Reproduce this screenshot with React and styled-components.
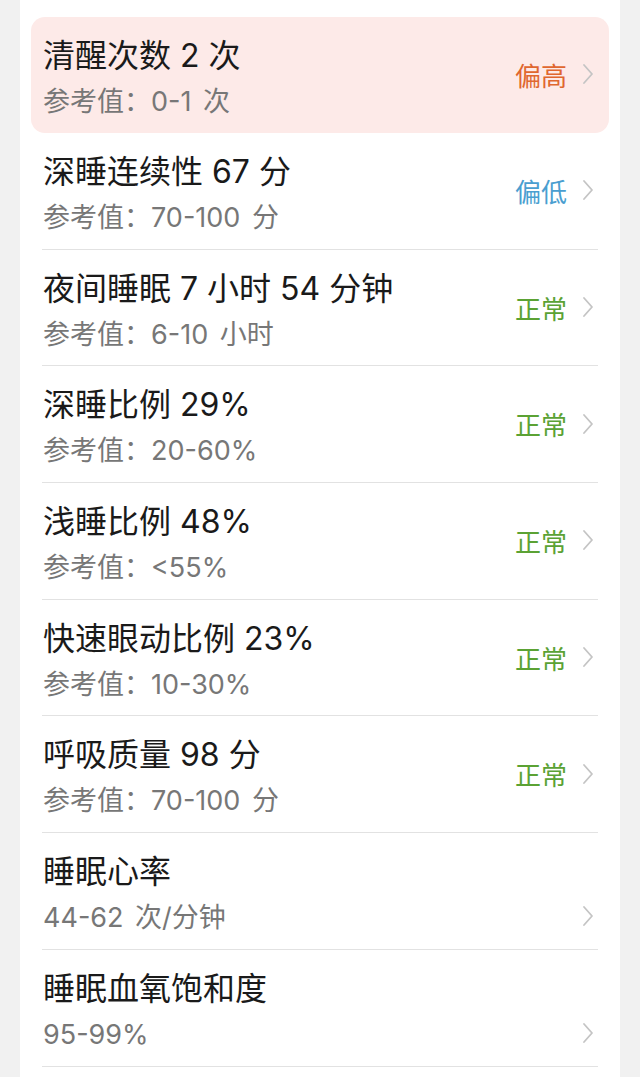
import React from 'react'
import styled, { createGlobalStyle } from 'styled-components'

const items = [
  { title: '清醒次数 2 次', sub: '参考值：0-1 次', status: '偏高', tone: 'high', active: true },
  { title: '深睡连续性 67 分', sub: '参考值：70-100 分', status: '偏低', tone: 'low' },
  { title: '夜间睡眠 7 小时 54 分钟', sub: '参考值：6-10 小时', status: '正常', tone: 'ok' },
  { title: '深睡比例 29%', sub: '参考值：20-60%', status: '正常', tone: 'ok' },
  { title: '浅睡比例 48%', sub: '参考值：<55%', status: '正常', tone: 'ok' },
  { title: '快速眼动比例 23%', sub: '参考值：10-30%', status: '正常', tone: 'ok' },
  { title: '呼吸质量 98 分', sub: '参考值：70-100 分', status: '正常', tone: 'ok' },
  { title: '睡眠心率', sub: '44-62 次/分钟' },
  { title: '睡眠血氧饱和度', sub: '95-99%' },
]

const toneColors = {
  high: '#e0672f',
  low: '#4a9ed0',
  ok: '#5ba234',
}

function Chevron({ low }) {
  return (
    <Arrow $low={low} width="14" height="22" viewBox="0 0 14 22">
      <path d="M3 2 L11 11 L3 20" fill="none" stroke="#c4c4c4" strokeWidth="1.8" strokeLinecap="round" strokeLinejoin="round" />
    </Arrow>
  )
}

function App() {
  return (
    <>
      <GlobalStyle />
      <Page>
        <Card>
          {items.map((it, i) => (
            <Row key={i} $active={it.active}>
              <TextCol>
                <Title>{it.title}</Title>
                <Sub>{it.sub}</Sub>
              </TextCol>
              {it.status ? (
                <Right>
                  <Status $tone={it.tone}>{it.status}</Status>
                  <Chevron />
                </Right>
              ) : (
                <Chevron low />
              )}
            </Row>
          ))}
        </Card>
      </Page>
    </>
  )
}

const GlobalStyle = createGlobalStyle`
body {
  margin: 0;
  background: #f1f1f1;
  font-family: Inter, "Noto Sans CJK SC", sans-serif;
}
`
const Page = styled.div`
height: 1077px;
overflow: hidden;
padding: 0 20px;
`
const Card = styled.div`
background: #fff;
padding: 17px 11px 40px;
min-height: 1077px;
box-sizing: border-box;
`
const Row = styled.div`
position: relative;
display: flex;
align-items: flex-start;
box-sizing: border-box;
height: ${p => p.$active ? '116px' : '116.7px'};
padding: 0 12px;
border-radius: ${p => p.$active ? '14px' : '0'};
background: ${p => p.$active ? '#fdeae8' : 'transparent'};
${p => !p.$active && `
  &::after {
    content: '';
    position: absolute;
    left: 11px;
    right: 11px;
    bottom: 0;
    height: 1px;
    background: #e2e2e2;
  }
`}
`
const TextCol = styled.div`
flex: 1;
padding-top: 20px;
display: flex;
flex-direction: column;
gap: 10px;
`
const Title = styled.div`
font-size: 32px;
line-height: 38px;
color: #1a1a1a;
white-space: nowrap;
`
const Sub = styled.div`
font-size: 27px;
line-height: 34px;
word-spacing: 4px;
color: #777;
white-space: nowrap;
`
const Right = styled.div`
align-self: center;
display: flex;
align-items: center;
gap: 14px;
margin-bottom: 2px;
`
const Status = styled.span`
font-size: 26px;
font-family: "Noto Sans CJK SC", sans-serif;
color: ${p => toneColors[p.$tone]};
`
const Arrow = styled.svg`
display: block;
flex-shrink: 0;
margin-right: 2px;
${p => p.$low && `margin-top: 72px;`}
`

export default App
